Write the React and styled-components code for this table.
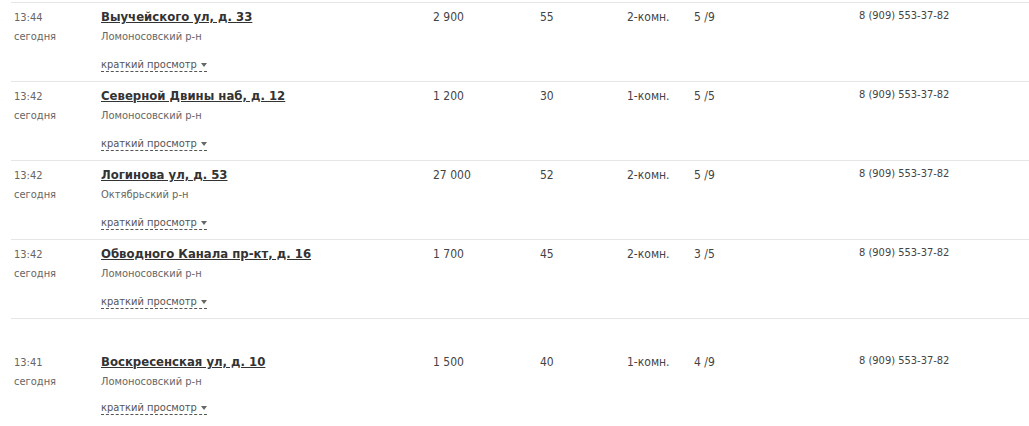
import React from 'react';
import styled, { createGlobalStyle } from 'styled-components';

const GlobalStyle = createGlobalStyle`
  html, body {
    margin: 0;
    padding: 0;
    background: #fff;
  }
  body {
    font-family: "DejaVu Sans", Verdana, sans-serif;
    font-stretch: condensed;
    color: #444;
  }
`;

const listings = [
  { time: '13:44', address: 'Выучейского ул, д. 33', district: 'Ломоносовский р-н', price: '2 900', area: '55', rooms: '2-комн.', floor: '5 /9' },
  { time: '13:42', address: 'Северной Двины наб, д. 12', district: 'Ломоносовский р-н', price: '1 200', area: '30', rooms: '1-комн.', floor: '5 /5' },
  { time: '13:42', address: 'Логинова ул, д. 53', district: 'Октябрьский р-н', price: '27 000', area: '52', rooms: '2-комн.', floor: '5 /9' },
  { time: '13:42', address: 'Обводного Канала пр-кт, д. 16', district: 'Ломоносовский р-н', price: '1 700', area: '45', rooms: '2-комн.', floor: '3 /5' },
  { time: '13:41', address: 'Воскресенская ул, д. 10', district: 'Ломоносовский р-н', price: '1 500', area: '40', rooms: '1-комн.', floor: '4 /9', spaced: true },
];

const List = styled.div`
  padding-top: 2px;
  margin-left: 11px;
`;

const Row = styled.div`
  display: grid;
  grid-template-columns: 87px 332px 107px 87px 67px 165px 1fr;
  align-items: start;
  border-top: 1px solid #e6e6e6;
  padding: ${p => (p.$spaced ? '34px' : '5px')} 0 0 3px;
  height: ${p => (p.$spaced ? '106px' : '79px')};
  box-sizing: border-box;
`;

const TimeCell = styled.div`
  font-size: 11px;
  line-height: 19px;
  color: #666;
`;

const Main = styled.div`
  display: flex;
  flex-direction: column;
`;

const Address = styled.a`
  font-size: 13px;
  font-weight: bold;
  line-height: 17px;
  color: #333;
  text-decoration: underline;
  align-self: flex-start;
`;

const District = styled.div`
  font-size: 11px;
  line-height: 18px;
  margin-top: 3px;
  color: #666;
`;

const Brief = styled.span`
  margin-top: ${p => (p.$tight ? '10px' : '12px')};
  align-self: flex-start;
  font-size: 11px;
  line-height: 13px;
  color: #555;
  border-bottom: 1px dashed #555;
  display: inline-flex;
  align-items: center;
  gap: 4px;
`;

const Caret = styled.span`
  width: 0;
  height: 0;
  border-left: 3.5px solid transparent;
  border-right: 3.5px solid transparent;
  border-top: 4px solid #666;
  margin-top: 1px;
`;

const Cell = styled.div`
  font-size: ${p => (p.$small ? '11px' : '12px')};
  line-height: 17px;
  margin-top: ${p => (p.$small ? '-1px' : '1px')};
  color: #444;
`;

export default function App() {
  return (
    <>
      <GlobalStyle />
      <List>
        {listings.map((item, i) => (
          <Row key={i} $spaced={item.spaced}>
            <TimeCell>
              {item.time}
              <br />
              сегодня
            </TimeCell>
            <Main>
              <Address href="#">{item.address}</Address>
              <District>{item.district}</District>
              <Brief $tight={item.spaced}>
                краткий просмотр <Caret />
              </Brief>
            </Main>
            <Cell>{item.price}</Cell>
            <Cell>{item.area}</Cell>
            <Cell>{item.rooms}</Cell>
            <Cell>{item.floor}</Cell>
            <Cell $small>8 (909) 553-37-82</Cell>
          </Row>
        ))}
      </List>
    </>
  );
}
